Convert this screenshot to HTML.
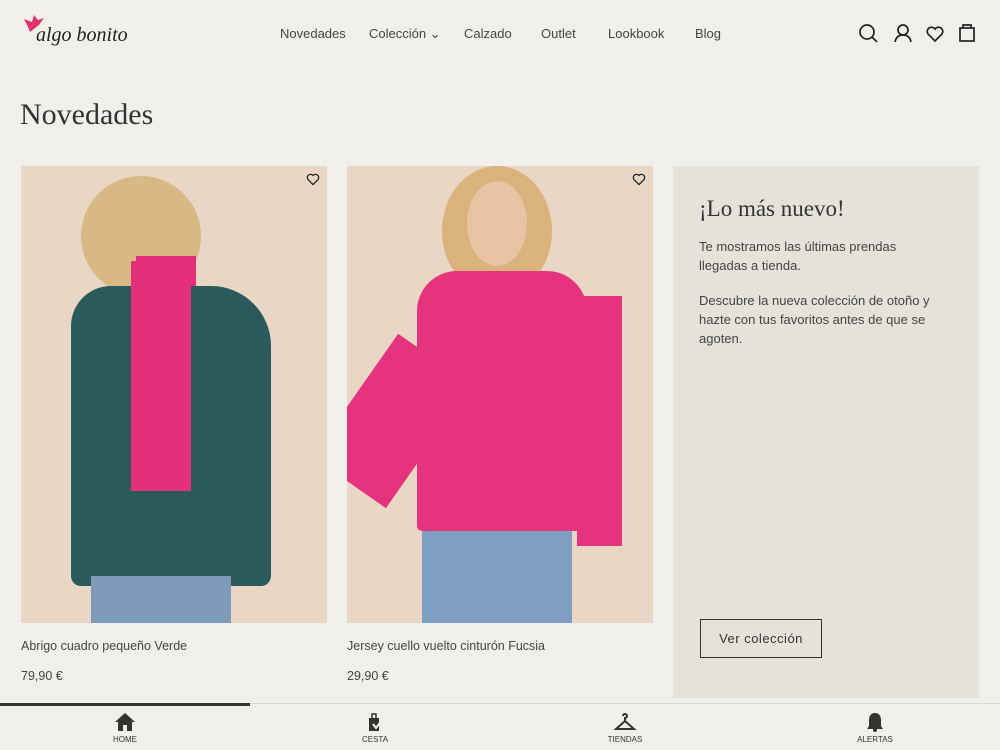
<!DOCTYPE html>
<html><head><meta charset="utf-8"><style>
*{margin:0;padding:0;box-sizing:border-box}
body{width:1000px;height:750px;overflow:hidden;background:#f0efeb;font-family:"Liberation Sans",sans-serif;color:#333;position:relative}
.nav a{position:absolute;top:26px;font-size:13px;color:#444;text-decoration:none}
h1{position:absolute;left:20px;top:98px;font-family:"Liberation Serif",serif;font-weight:normal;font-size:30px;color:#333}
.card{position:absolute;top:166px;width:306px;height:457px;background:#e9d6c4;overflow:hidden}
.t{position:absolute;font-size:12.5px;color:#444}
.panel{position:absolute;left:673px;top:166px;width:306px;height:532px;background:#e5e2da}
.panel h2{position:absolute;left:26px;top:30px;font-family:"Liberation Serif",serif;font-weight:normal;font-size:23px;color:#333}
.panel p{position:absolute;left:26px;width:245px;font-size:13px;line-height:19px;color:#444}
.btn{position:absolute;left:27px;top:453px;width:122px;height:39px;border:1px solid #333;font-size:13px;letter-spacing:.5px;text-align:center;line-height:37px;color:#333}
.bn{position:absolute;top:703px;left:0;width:1000px;height:47px;border-top:1px solid #d8d6d0;background:#f0efeb}
.bi{position:absolute;top:8px;width:80px;text-align:center;font-size:8px;color:#333}
.bi svg{display:block;margin:0 auto 3px}
</style></head><body>
<svg style="position:absolute;left:22px;top:13px" width="30" height="22" viewBox="0 0 30 22"><path d="M2 6 L10 9 L12 2 L16 7 L22 5 L17 12 L8 19 L6 14 Z" fill="#e2336f"/></svg>
<div style="position:absolute;left:36px;top:24px;font-family:'Liberation Serif',serif;font-style:italic;font-size:20px;color:#222">algo bonito</div>
<div class="nav"><a style="left:280px">Novedades</a><a style="left:369px">Colección ⌄</a><a style="left:464px">Calzado</a><a style="left:541px">Outlet</a><a style="left:608px">Lookbook</a><a style="left:695px">Blog</a></div>
<svg style="position:absolute;left:858px;top:23px" width="120" height="20" viewBox="0 0 120 20" fill="none" stroke="#222" stroke-width="1.7"><circle cx="9" cy="9" r="7"/><path d="M14 14l5 5"/><circle cx="45" cy="7" r="5"/><path d="M37 19c1-5 4-7 8-7s7 2 8 7"/><path d="M77 18l-7-7a4 4 0 0 1 7-5 4 4 0 0 1 7 5z"/><rect x="102" y="5" width="14" height="13"/><path d="M105 5V2h8v3"/></svg>
<h1>Novedades</h1>
<div class="card" style="left:21px">
<div style="position:absolute;left:60px;top:10px;width:120px;height:120px;border-radius:50%;background:#d8b883"></div>
<div style="position:absolute;left:115px;top:90px;width:60px;height:360px;background:#e4307a"></div>
<div style="position:absolute;left:50px;top:120px;width:200px;height:300px;border-radius:40px 60px 10px 10px;background:#2a5a5c"></div>
<div style="position:absolute;left:110px;top:95px;width:60px;height:230px;background:#e4307a"></div>
<div style="position:absolute;left:70px;top:410px;width:140px;height:50px;background:#7d9ab8"></div>
<svg style="position:absolute;left:285px;top:6px" width="14" height="14" viewBox="0 0 20 20" fill="none" stroke="#222" stroke-width="1.8"><path d="M10 18l-7-7a4 4 0 0 1 7-6 4 4 0 0 1 7 6z"/></svg></div>
<div class="card" style="left:347px">
<div style="position:absolute;left:95px;top:0;width:110px;height:130px;border-radius:50%;background:#d9b27c"></div>
<div style="position:absolute;left:120px;top:15px;width:60px;height:85px;border-radius:50%;background:#e8c3a4"></div>
<div style="position:absolute;left:70px;top:105px;width:170px;height:260px;border-radius:40px 40px 5px 5px;background:#e6337e"></div>
<div style="position:absolute;left:0;top:180px;width:90px;height:150px;background:#e6337e;transform:rotate(35deg)"></div>
<div style="position:absolute;left:230px;top:130px;width:45px;height:250px;background:#e6337e"></div>
<div style="position:absolute;left:75px;top:365px;width:150px;height:95px;background:#7e9fc2"></div>
<svg style="position:absolute;left:285px;top:6px" width="14" height="14" viewBox="0 0 20 20" fill="none" stroke="#222" stroke-width="1.8"><path d="M10 18l-7-7a4 4 0 0 1 7-6 4 4 0 0 1 7 6z"/></svg></div>
<div class="t" style="left:21px;top:639px">Abrigo cuadro pequeño Verde</div>
<div class="t" style="left:21px;top:669px">79,90 €</div>
<div class="t" style="left:347px;top:639px">Jersey cuello vuelto cinturón Fucsia</div>
<div class="t" style="left:347px;top:669px">29,90 €</div>
<div class="panel"><h2>¡Lo más nuevo!</h2>
<p style="top:71px">Te mostramos las últimas prendas<br>llegadas a tienda.</p>
<p style="top:125px">Descubre la nueva colección de otoño y hazte con tus favoritos antes de que se agoten.</p>
<div class="btn">Ver colección</div></div>
<div class="bn"><div style="position:absolute;left:0;top:-1px;width:250px;height:3px;background:#333"></div>
<div class="bi" style="left:85px"><svg width="22" height="20" viewBox="0 0 22 20" fill="#333"><path d="M11 1L1 10h3v9h5v-6h4v6h5v-9h3z"/></svg>HOME</div>
<div class="bi" style="left:335px"><svg width="22" height="20" viewBox="0 0 22 20" fill="#333"><path d="M5 6h10v13H5z"/><path d="M8 6V2h4v4" fill="none" stroke="#333" stroke-width="1.5"/><path d="M9 12l3 4 6-8" fill="none" stroke="#f0efeb" stroke-width="2"/></svg>CESTA</div>
<div class="bi" style="left:585px"><svg width="24" height="20" viewBox="0 0 24 20" fill="none" stroke="#333" stroke-width="2"><path d="M10 4a2 2 0 1 1 2 2v3L3 17h18L12 9"/></svg>TIENDAS</div>
<div class="bi" style="left:835px"><svg width="22" height="20" viewBox="0 0 22 20" fill="#333"><path d="M11 1c-4 0-6 3-6 7v6l-2 3h16l-2-3V8c0-4-2-7-6-7z"/><circle cx="11" cy="18" r="2"/></svg>ALERTAS</div></div>
</body></html>
